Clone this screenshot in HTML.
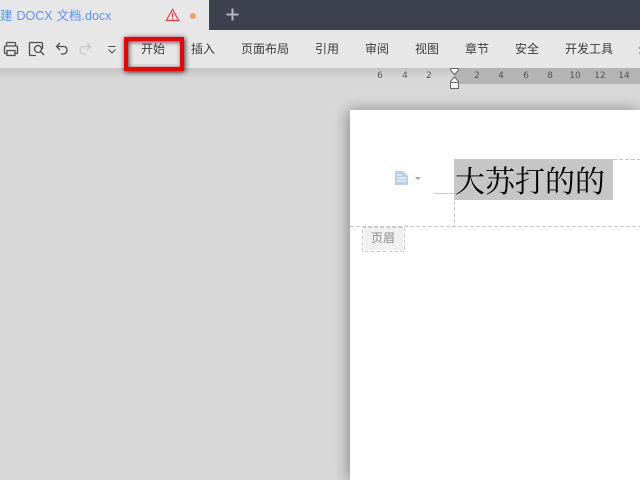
<!DOCTYPE html>
<html><head><meta charset="utf-8"><style>
html,body{margin:0;padding:0}
body{width:640px;height:480px;overflow:hidden;position:relative;background:#d8d8d8;font-family:"Liberation Sans","Noto Sans CJK SC",sans-serif}
div,span{position:absolute;white-space:nowrap}
.m{top:41px;font-size:12px;line-height:16px;color:#3c3c3c}
.r{top:70px;font-size:9px;line-height:12px;color:#555;width:20px;text-align:center;font-family:"DejaVu Sans",sans-serif}
</style></head><body>
<div style="left:0;top:0;width:640px;height:30px;background:#3d404d"></div>
<div style="left:0;top:0;width:209px;height:30px;background:#e7e7e7"></div>
<div style="left:0;top:8px;font-size:12.5px;line-height:16px;color:#5a93f5;word-spacing:.5px">建 DOCX 文档.docx</div>
<svg style="position:absolute;left:165px;top:8px" width="15" height="14" viewBox="0 0 15 14"><path d="M7.500 1.500L1.200 12.500H13.800Z" fill="none" stroke="#d9434a" stroke-width="1.200"/><path d="M7.500 5V9M7.500 10V11.500" stroke="#d9434a" stroke-width="1.200"/></svg>
<div style="left:190px;top:13px;width:6px;height:6px;border-radius:50%;background:#eda45f"></div>
<svg style="position:absolute;left:225px;top:7px" width="15" height="15"><path d="M1.500 7.500H13.500M7.500 1.500V13.500" stroke="#b4b6bc" stroke-width="2"/></svg>
<div style="left:0;top:30px;width:640px;height:38px;background:#e7e7e7"></div>
<div style="left:0;top:68px;width:640px;height:10px;background:linear-gradient(#c4c4c4,#d8d8d8)"></div>
<svg style="position:absolute;left:0;top:40px" width="125" height="22" fill="none" stroke="#4e4e4e" stroke-width="1.300">
<path d="M6.500 6.500V3.500Q6.500 2.500 7.500 2.500H14.500Q15.500 2.500 15.500 3.500V6.500M6.500 13.500H5.500Q4.500 13.500 4.500 12.500V7.500Q4.500 6 6 6H16Q17.500 6 17.500 7.500V12.500Q17.500 13.500 16.500 13.500H15.500M7 10.500H15V15.500H7Z"/>
<path d="M36 15.500H30.500Q29.500 15.500 29.500 14.500V3.500Q29.500 2.500 30.500 2.500H41.500Q42.500 2.500 42.500 3.500V9"/><circle cx="38" cy="9" r="3.500"/><path d="M40.500 11.500L44 15"/>
<path d="M60 3L56.500 6.500L60 10M56.500 6.500H63.500Q67 6.500 67 10T63.500 14H61"/>
<path stroke="#c5c5c5" d="M87 3L90.500 6.500L87 10M90.500 6.500H83.500Q80 6.500 80 10T83.500 14H86"/>
<path stroke-width="1" d="M108.500 6.500H115.500M108.500 9.500L112 13L115.500 9.500"/>
</svg>
<div class="m" style="left:141px">开始</div>
<div class="m" style="left:191px">插入</div>
<div class="m" style="left:241px">页面布局</div>
<div class="m" style="left:315px">引用</div>
<div class="m" style="left:365px">审阅</div>
<div class="m" style="left:415px">视图</div>
<div class="m" style="left:465px">章节</div>
<div class="m" style="left:515px">安全</div>
<div class="m" style="left:565px">开发工具</div>
<div class="m" style="left:638px">云</div>
<div style="left:124px;top:37px;width:60px;height:34px;box-sizing:border-box;border:4px solid #f00000;box-shadow:1px 1px 5px rgba(0,0,0,.8),inset 1px 1px 5px rgba(0,0,0,.7)"></div>
<div style="left:454px;top:68px;width:186px;height:16px;background:#b4b4b4"></div>
<div class="r" style="left:370px">6</div>
<div class="r" style="left:395px">4</div>
<div class="r" style="left:419px">2</div>
<div class="r" style="left:467px">2</div>
<div class="r" style="left:491px">4</div>
<div class="r" style="left:516px">6</div>
<div class="r" style="left:540px">8</div>
<div class="r" style="left:565px">10</div>
<div class="r" style="left:590px">12</div>
<div class="r" style="left:614px">14</div>
<svg style="position:absolute;left:450px;top:68px" width="10" height="22"><path d="M.5 .5H8.500V2L4.500 6.500L.5 2Z" fill="#fff" stroke="#666"/><path d="M4.500 9L.5 13.500V20.500H8.500V13.500Z" fill="#fff" stroke="#666"/><path d="M.5 14.500H8.500" stroke="#666"/></svg>
<div style="left:350px;top:110px;width:290px;height:370px;background:#fff;box-shadow:-2px 0 14px rgba(0,0,0,.36)"></div>
<div style="left:454px;top:159px;width:159px;height:41px;background:#c6c6c6"></div>
<div style="left:455px;top:158px;font-size:30px;line-height:42px;color:#000;font-family:'Noto Serif CJK SC','Noto Sans CJK SC',serif">大苏打的的</div>
<svg style="position:absolute;left:350px;top:155px" width="290" height="100" fill="none" stroke="#c8c8c8" stroke-dasharray="4 2">
<path d="M0 71.500H290"/><path d="M104.500 4V71"/><path d="M263 4.500H290"/><path d="M84 38.500H104" stroke-dasharray="none"/>
<rect x="12.500" y="72.500" width="42" height="24"/></svg>
<div style="left:364px;top:228px;width:39px;height:22px;background:#f0f0f0"></div>
<div style="left:371px;top:230px;font-size:12px;line-height:16px;color:#8a8a8a">页眉</div>
<svg style="position:absolute;left:394px;top:170px" width="26" height="16"><path d="M1 1H9L14 6V15H1Z" fill="#bccfe8"/><path d="M3 5H8M3 8H12M3 11H12" stroke="#fff"/><path d="M21 7H27L24 10Z" fill="#a5a5a5"/></svg>
</body></html>
